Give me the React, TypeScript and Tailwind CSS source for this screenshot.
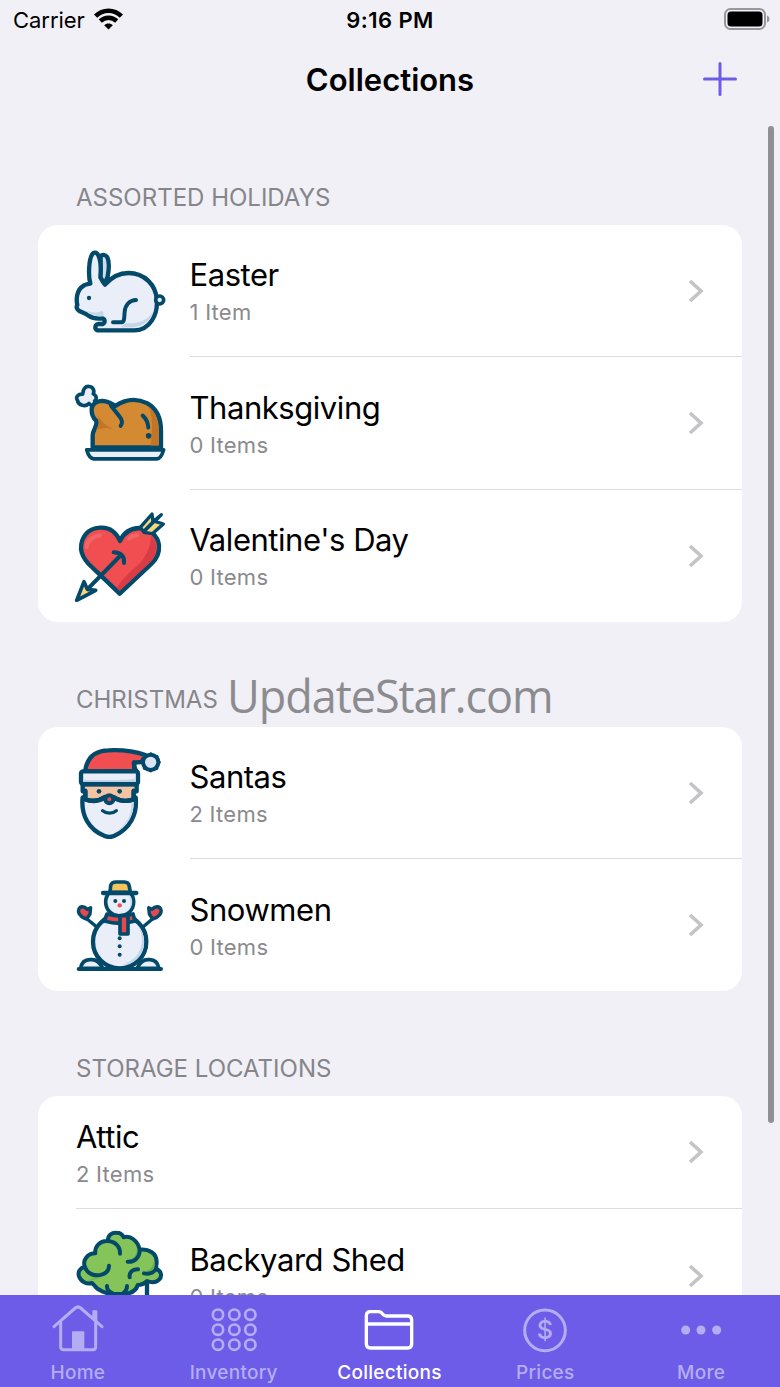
import { ReactNode } from 'react'
import clsx from 'clsx'

const INK = '#03496a'

interface Collection {
  name: string
  count: string
  icon?: ReactNode
}

interface Section {
  title: string
  items: Collection[]
}

interface IconProps {
  viewBox: string
  children: ReactNode
}

function Art({ viewBox, children }: IconProps) {
  return (
    <svg
      className="block h-[92px] w-[92px]"
      viewBox={viewBox}
      fill="none"
      stroke={INK}
      strokeWidth="13"
      strokeLinecap="round"
      strokeLinejoin="round"
    >
      {children}
    </svg>
  )
}

function TabIcon({ viewBox, children }: IconProps) {
  return (
    <svg
      className="block h-[52px] w-[56px]"
      viewBox={viewBox}
      fill="none"
      stroke="currentColor"
      strokeWidth="9"
      strokeLinecap="round"
      strokeLinejoin="round"
    >
      {children}
    </svg>
  )
}

const Rabbit = () => (
  <Art viewBox="27 15 276 276">
    <path
      d="M107 50C110 43 121 42 127 52C134 66 132 88 128 110L118 134L106 112Z"
      fill="#cfdcec"
    />
    <path
      d="M76 131C69 105 72 59 81 44C86 35 95 36 100 46C108 63 108 91 106 112C110 120 114 127 120 134C139 112 164 99 190 99C239 99 273 136 275 178C280 222 255 271 208 271H98C88 268 89 255 99 252H113C121 248 121 238 112 235C98 237 84 236 70 227C60 219 50 217 43 213C35 208 33 201 37 195C33 178 35 151 53 139C60 133 68 132 76 131Z"
      fill="#e9eef9"
    />
    <path d="M120 262H206C239 258 260 237 266 210C258 230 238 245 205 250H180L168 262Z" fill="#c5d6e8" stroke="none" />
    <path d="M62 210C80 220 98 219 112 212C117 218 117 225 113 229C94 230 76 224 62 210Z" fill="#c5d6e8" stroke="none" />
    <path d="M144 247H166C180 247 177 236 179 215C181 194 194 181 213 180" strokeWidth="12" />
    <circle cx="284" cy="180" r="12" fill="#e9eef9" strokeWidth="11" />
    <circle cx="72" cy="174" r="6.5" fill={INK} stroke="none" />
  </Art>
)

const Turkey = () => (
  <Art viewBox="27 7.5 276 276">
    <path
      d="M82 96L72 87C62 98 40 94 37 77C31 66 40 58 53 59C54 43 61 34 73 36C84 37 89 48 85 58C97 66 95 74 89 79L97 86Z"
      fill="#e9eef9"
      strokeWidth="11"
    />
    <path
      d="M83 219V182C84 164 98 155 94 139C86 132 79 120 80 103C82 88 94 80 111 79C129 79 140 88 151 94C180 75 214 70 246 86C275 102 288 132 288 168V219Z"
      fill="#d38a32"
    />
    <path d="M250 97C264 122 263 173 257 213H281V168C281 137 270 112 250 97Z" fill="#c37527" stroke="none" />
    <path d="M100 124C110 142 121 152 143 164C120 158 107 160 93 168L102 148Z" fill="#c37527" stroke="none" />
    <path d="M138 94L163 125C173 137 174 145 167 154" strokeWidth="12" />
    <path d="M233 123C244 133 249 145 250 159" strokeWidth="12" />
    <circle cx="251" cy="184" r="8.5" fill={INK} stroke="none" />
    <path d="M65 226H296C291 243 285 253 276 253H86C76 252 69 241 65 226Z" fill="#e9eef9" strokeWidth="11" />
  </Art>
)

const Heart = () => (
  <Art viewBox="27 15 276 276">
    <path
      d="M165 108C151 76 127 66 104 68C67 70 47 98 48 132C50 151 59 164 71 177L164 266L259 177C273 164 284 145 282 121C279 93 253 69 224 69C194 70 175 85 165 108Z"
      fill="#f04e50"
    />
    <path
      d="M258 92C256 134 240 158 218 181C193 202 170 225 155 248L164 257L255 172C279 145 280 113 258 92Z"
      fill="#d93c45"
      stroke="none"
    />
    <path d="M65 126C68 105 80 95 104 91" stroke="#f26566" strokeWidth="13" />
    <path d="M192 101C198 95 207 92 217 91" stroke="#f26566" strokeWidth="12" />
    <path d="M146 142C168 143 179 153 177 174M168 150L67 253" strokeWidth="12" />
    <path d="M35 286L57 230L67 253L92 256Z" fill="#f8d57e" strokeWidth="11" />
    <path d="M226 67L261 27L264 50L289 29L270 49L295 57L262 86L237 82Z" fill="#f8d57e" strokeWidth="10" />
    <path d="M238 78L269 47" strokeWidth="11" />
  </Art>
)

const Santa = () => (
  <Art viewBox="27 27 276 276">
    <path
      d="M53 178C47 232 72 276 119 294Q133 300 147 294C193 274 218 231 212 178Z"
      fill="#e9eef9"
    />
    <path d="M199 194C201 235 181 264 149 282C184 266 205 238 206 194Z" fill="#c5d6e8" stroke="none" />
    <path
      d="M53 139V160H61V184C84 192 103 188 119 177H146C163 190 183 192 206 184V160H215V139Z"
      fill="#f3c4a4"
    />
    <path d="M61 158V184C84 193 105 188 119 179M206 158V184C183 192 162 188 147 179" />
    <path
      d="M60 101C65 62 85 38 130 37C175 35 213 41 241 51L230 72L207 74L209 99Z"
      fill="#f04e50"
    />
    <path d="M207 73C206 84 208 92 215 101" />
    <rect x="48" y="100" width="171" height="38" rx="6" fill="#e9eef9" />
    <path d="M55 131H212V122C171 127 107 127 55 125Z" fill="#c5d6e8" stroke="none" />
    <circle cx="257" cy="73" r="23" fill="#d9e4f3" strokeWidth="12" />
    <circle cx="257" cy="73" r="25" strokeWidth="11" strokeDasharray="0.1 19.5" />
    <circle cx="133" cy="184" r="12" fill="#f04e50" strokeWidth="12" />
    <path d="M113 218C125 228 142 228 154 218" strokeWidth="10" />
    <circle cx="102" cy="160" r="7" fill={INK} stroke="none" />
    <circle cx="164" cy="160" r="7" fill={INK} stroke="none" />
  </Art>
)

const Snowman = () => (
  <Art viewBox="27 27 276 276">
    <path d="M47 295C50 277 59 268 77 269C92 267 105 278 114 295ZM282 295C278 277 269 268 252 269C237 267 224 278 216 295Z" fill="#e9eef9" strokeWidth="11" />
    <path d="M66 147L97 172M262 147L233 172" strokeWidth="10" />
    <path d="M65 147C48 144 38 128 41 119C44 108 57 107 67 118L77 113L75 132Z" fill="#e5484e" strokeWidth="10" />
    <path d="M263 147C280 144 291 128 288 119C284 108 271 107 261 118L251 113L253 132Z" fill="#e5484e" strokeWidth="10" />
    <circle cx="164" cy="215" r="80" fill="#e9eef9" />
    <path d="M222 172C246 226 219 269 172 285C216 281 240 249 237 213C237 196 231 183 222 172Z" fill="#c5d6e8" stroke="none" />
    <circle cx="164" cy="96" r="42" fill="#e9eef9" strokeWidth="11" />
    <path d="M190 72C203 97 196 119 182 130C204 115 209 86 190 72Z" fill="#c5d6e8" stroke="none" />
    <path d="M126 132C150 139 180 139 204 132L210 153C181 162 147 162 118 153Z" fill="#e5484e" strokeWidth="11" />
    <path d="M165 137H189V192H165Z" fill="#e5484e" strokeWidth="11" />
    <path d="M135 67L137 47C139 37 146 36 154 36H178C188 36 192 41 193 50L196 67Z" fill="#f5c55c" strokeWidth="11" />
    <path d="M114 69H214" />
    <circle cx="164" cy="106" r="6.5" fill="#f04e50" stroke="none" />
    <g fill={INK} stroke="none">
      <circle cx="151" cy="93" r="6" />
      <circle cx="177" cy="93" r="6" />
      <circle cx="164" cy="205" r="6" />
      <circle cx="164" cy="229" r="6" />
      <circle cx="164" cy="254" r="6" />
    </g>
    <path d="M41 297H288" strokeWidth="12" />
  </Art>
)

const Tree = () => (
  <Art viewBox="27 29 276 276">
    <path d="M246 190V290" />
    <path
      d="M81 188C65 193 47 183 42 168C37 153 47 143 59 138C53 119 67 99 91 99C88 78 106 60 128 62C129 45 140 36 155 37C167 37 173 44 176 51C196 45 218 60 224 88C249 84 276 98 275 126L273 146C290 151 292 169 282 178C270 190 256 186 246 182C237 191 232 194 218 194C214 213 196 219 180 221H149C125 222 98 210 88 195Z"
      fill="#84c459"
      strokeWidth="12"
    />
    <path d="M65 180C92 175 115 165 124 149C126 164 101 177 72 181ZM190 118C206 115 214 102 216 88C226 102 209 120 190 118ZM240 153C257 150 265 137 266 123C277 144 256 157 240 153Z" fill="#6cae4d" stroke="none" />
    <path d="M128 62C151 63 166 79 165 100" strokeWidth="12" />
    <path d="M224 88C225 112 207 126 188 124" strokeWidth="12" />
    <path d="M59 139C69 164 92 169 112 162C127 157 132 147 132 136" strokeWidth="12" />
    <path d="M273 146C265 158 251 162 237 159" strokeWidth="12" />
    <path d="M219 147C202 146 192 157 194 171" strokeWidth="12" />
    <path d="M126 197C125 205 132 214 143 219M186 197C186 207 181 214 174 219" strokeWidth="12" />
  </Art>
)

const sections: Section[] = [
  {
    title: 'ASSORTED HOLIDAYS',
    items: [
      { name: 'Easter', count: '1 Item', icon: <Rabbit /> },
      { name: 'Thanksgiving', count: '0 Items', icon: <Turkey /> },
      { name: "Valentine's Day", count: '0 Items', icon: <Heart /> },
    ],
  },
  {
    title: 'CHRISTMAS',
    items: [
      { name: 'Santas', count: '2 Items', icon: <Santa /> },
      { name: 'Snowmen', count: '0 Items', icon: <Snowman /> },
    ],
  },
  {
    title: 'STORAGE LOCATIONS',
    items: [
      { name: 'Attic', count: '2 Items' },
      { name: 'Backyard Shed', count: '0 Items', icon: <Tree /> },
    ],
  },
]

const tabs = [
  {
    label: 'Home',
    icon: (
      <TabIcon viewBox="149 35 168 156">
        <path d="M161 109L225 53Q233 46 241 53L305 109M181 96V170Q181 178 190 178H278Q286 178 286 170V96" />
        <path d="M278 62H289V93L278 83Z" fill="currentColor" strokeWidth="4" />
        <path d="M217 125H250V176H217Z" fill="currentColor" strokeWidth="4" />
      </TabIcon>
    ),
  },
  {
    label: 'Inventory',
    icon: (
      <TabIcon viewBox="616 35 168 156">
        {[73, 118, 163].map((y) =>
          [652, 701, 749].map((x) => <circle key={`${x}-${y}`} cx={x} cy={y} r="15.5" strokeWidth="8" />),
        )}
      </TabIcon>
    ),
  },
  {
    label: 'Collections',
    active: true,
    icon: (
      <TabIcon viewBox="1084 35 168 156">
        <path
          d="M1100 161V76Q1100 64 1112 64H1137Q1143 64 1147 69L1152 74Q1156 77 1161 77H1224Q1236 77 1236 89V161Q1236 173 1224 173H1112Q1100 173 1100 161ZM1100 101H1236"
          strokeWidth="10"
        />
      </TabIcon>
    ),
  },
  {
    label: 'Prices',
    icon: (
      <TabIcon viewBox="381 35 168 156">
        <circle cx="465" cy="120" r="61" />
        <text
          x="465"
          y="147"
          textAnchor="middle"
          fontSize="76"
          fill="currentColor"
          stroke="none"
          className="font-['Inter',sans-serif] font-medium"
        >
          $
        </text>
      </TabIcon>
    ),
  },
  {
    label: 'More',
    icon: (
      <TabIcon viewBox="849 35 168 156">
        <g fill="currentColor" stroke="none">
          <circle cx="887" cy="119" r="13.5" />
          <circle cx="933" cy="119" r="13.5" />
          <circle cx="980" cy="119" r="13.5" />
        </g>
      </TabIcon>
    ),
  },
]

function StatusBar() {
  return (
    <div className="grid h-[38px] shrink-0 grid-cols-[1fr_auto_1fr] items-center">
      <div className="flex items-center gap-[9px] pl-[13px]">
        <span className="mt-0.5 text-[22px] leading-none tracking-[-0.05px]">Carrier</span>
        <svg className="h-[22px] w-[29px]" viewBox="0 0 29 22" fill="none" stroke="#000" strokeWidth="4.6">
          <path d="M1.6 8.2C8.8 1 20.2 1 27.4 8.2" />
          <path d="M6.3 13C11 8.7 18 8.7 22.7 13" />
          <path d="M14.5 21.5L10.2 17.3C12.5 15 16.5 15 18.8 17.3Z" fill="#000" stroke="none" />
        </svg>
      </div>
      <span className="mt-0.5 text-[22px] leading-none font-semibold tracking-[0.45px]">9:16 PM</span>
      <svg className="mr-[10px] ml-auto h-[22px] w-[46px]" viewBox="0 0 46 22">
        <rect x="1" y="1" width="40" height="20" rx="5.5" fill="none" stroke="#98979b" strokeWidth="2" />
        <rect x="3.5" y="3.5" width="35" height="15" rx="3.5" />
        <path d="M43 7.5C46.3 8.5 46.3 13.5 43 14.5Z" fill="#98979b" />
      </svg>
    </div>
  )
}

function Row({ item, last }: { item: Collection; last: boolean }) {
  return (
    <div className={clsx('flex pl-[38px]', item.icon ? 'h-[132.3px]' : 'h-[113px]')}>
      {item.icon && <div className="-ml-[2px] mr-[1.5px] flex w-[114px] shrink-0 items-center">{item.icon}</div>}
      <div
        className={clsx(
          'flex flex-1 items-center justify-between pr-[38px]',
          !last && 'border-b-[1.5px] border-[#dcdcdf]',
        )}
      >
        <div className="pt-[3.5px]">
          <p className="text-[31px] leading-[38px] tracking-[-0.45px]">{item.name}</p>
          <p className="mt-[2px] text-[22px] leading-[32px] tracking-[0.25px] text-[#8a8a8e]">{item.count}</p>
        </div>
        <svg className="h-6 w-4" viewBox="0 0 16 24" fill="none" stroke="#c4c4c7" strokeWidth="3.6">
          <path d="M2 2L13 12L2 22" />
        </svg>
      </div>
    </div>
  )
}

export default function App() {
  return (
    <div className="relative flex h-[1387px] w-[780px] flex-col overflow-hidden bg-[#f1f0f6] font-['Inter',sans-serif] text-black">
      <StatusBar />
      <header className="grid h-[82px] shrink-0 grid-cols-[1fr_auto_1fr] items-center">
        <h1 className="col-start-2 text-[31px] leading-none font-semibold whitespace-nowrap">Collections</h1>
        <svg
          className="mr-[43px] ml-auto h-[34px] w-[34px]"
          viewBox="0 0 34 34"
          stroke="#6c5ce7"
          strokeWidth="3"
          strokeLinecap="round"
        >
          <path d="M17 1.5V32.5M1.5 17H32.5" />
        </svg>
      </header>

      <main className="min-h-0 flex-1 overflow-hidden px-[38px]">
        {sections.map((section) => (
          <section key={section.title}>
            <div className="flex h-[105px] items-end pb-[11px] pl-[38px]">
              <h2 className="text-[24px] leading-[32px] text-[#85858a]">{section.title}</h2>
            </div>
            <div className="overflow-hidden rounded-[20px] bg-white">
              {section.items.map((item, i) => (
                <Row key={item.name} item={item} last={i === section.items.length - 1} />
              ))}
            </div>
          </section>
        ))}
      </main>

      <nav className="grid h-[92.5px] shrink-0 grid-cols-5 bg-[#6c5ce7] pr-px">
        {tabs.map((tab) => (
          <div
            key={tab.label}
            className={clsx('flex flex-col items-center pt-[7px]', tab.active ? 'text-white' : 'text-[#b5adf3]')}
          >
            {tab.icon}
            <span className="mt-[7px] text-[19px] leading-6 font-medium tracking-[0.25px]">{tab.label}</span>
          </div>
        ))}
      </nav>

      <div className="absolute top-[126px] right-[6px] h-[997px] w-[6px] rounded-full bg-[#8f8f94]" />
      <p className="absolute top-[664px] left-[227px] font-['Open_Sans',sans-serif] text-[45px] leading-[64px] tracking-[-1.05px] text-[#8c8c90]">
        UpdateStar.com
      </p>
    </div>
  )
}
